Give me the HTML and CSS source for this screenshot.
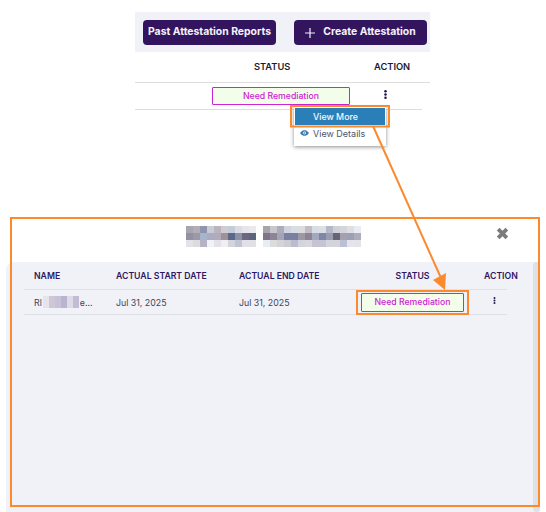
FILE: index.html
```html
<!DOCTYPE html>
<html lang="en">
<head>
<meta charset="utf-8">
<title>Attestation</title>
<link rel="stylesheet" href="styles.css">
</head>
<body>
<section class="top">
  <div class="toolbar">
    <button class="btn btn-past">Past Attestation Reports</button>
    <button class="btn btn-create"><svg class="plus" viewBox="0 0 10 10"><path d="M5 0V10M0 5H10"/></svg>Create Attestation</button>
  </div>
  <div class="top-head">
    <span class="top-status">STATUS</span>
    <span class="top-action">ACTION</span>
  </div>
  <div class="top-row">
    <span class="badge top-badge">Need Remediation</span>
    <svg class="dots top-dots" viewBox="0 0 3 10"><circle cx="1.5" cy="1.400" r="1.400"/><circle cx="1.5" cy="5" r="1.400"/><circle cx="1.5" cy="8.600" r="1.400"/></svg>
    <div class="menu">
      <div class="menu-item active">View More</div>
      <div class="menu-item"><svg class="eye" viewBox="0 0 16 10"><path d="M0 5C3 1 5.500 0 8 0s5 1 8 5c-3 4-5.500 5-8 5S3 9 0 5z"/><circle cx="8" cy="5" r="2.500" fill="#fff"/><circle cx="8" cy="5" r="1.400"/></svg>View Details</div>
    </div>
  </div>
</section>

<section class="modal">
  <header class="modal-head">
    <svg class="blur-title" width="175" height="21" viewBox="0 0 25 3" shape-rendering="crispEdges">
      <g>
        <rect x="0" y="0" width="1" height="1" fill="#a8a4b0"/><rect x="1" y="0" width="1" height="1" fill="#b3aeb6"/><rect x="2" y="0" width="1" height="1" fill="#9094ac"/><rect x="3" y="0" width="1" height="1" fill="#c8ccd8"/><rect x="4" y="0" width="1" height="1" fill="#bcb4bc"/><rect x="5" y="0" width="1" height="1" fill="#d0ccd4"/><rect x="6" y="0" width="1" height="1" fill="#c4ccd8"/><rect x="7" y="0" width="1" height="1" fill="#dcdce4"/><rect x="8" y="0" width="1" height="1" fill="#e4e4ea"/><rect x="9" y="0" width="1" height="1" fill="#eaeaee"/>
        <rect x="11" y="0" width="1" height="1" fill="#a8a4ac"/><rect x="12" y="0" width="1" height="1" fill="#c8c8cc"/><rect x="13" y="0" width="1" height="1" fill="#acacbc"/><rect x="14" y="0" width="1" height="1" fill="#d0d4e0"/><rect x="15" y="0" width="1" height="1" fill="#d8dce4"/><rect x="16" y="0" width="1" height="1" fill="#dcdce0"/><rect x="17" y="0" width="1" height="1" fill="#c4bcc4"/><rect x="18" y="0" width="1" height="1" fill="#d8dce4"/><rect x="19" y="0" width="1" height="1" fill="#dce0e6"/><rect x="20" y="0" width="1" height="1" fill="#b4b8c8"/><rect x="21" y="0" width="1" height="1" fill="#d0d0d8"/><rect x="22" y="0" width="1" height="1" fill="#d4d6dc"/><rect x="23" y="0" width="1" height="1" fill="#e0dee0"/><rect x="24" y="0" width="1" height="1" fill="#e8ecf4"/>
      </g>
      <g>
        <rect x="0" y="1" width="1" height="1" fill="#9490a0"/><rect x="1" y="1" width="1" height="1" fill="#9c98a8"/><rect x="2" y="1" width="1" height="1" fill="#a8b4cc"/><rect x="3" y="1" width="1" height="1" fill="#acacc0"/><rect x="4" y="1" width="1" height="1" fill="#b0acbc"/><rect x="5" y="1" width="1" height="1" fill="#a09098"/><rect x="6" y="1" width="1" height="1" fill="#5c6888"/><rect x="7" y="1" width="1" height="1" fill="#8c90a8"/><rect x="8" y="1" width="1" height="1" fill="#6c6880"/><rect x="9" y="1" width="1" height="1" fill="#5c6480"/>
        <rect x="11" y="1" width="1" height="1" fill="#807488"/><rect x="12" y="1" width="1" height="1" fill="#8c8498"/><rect x="13" y="1" width="1" height="1" fill="#a4a4b4"/><rect x="14" y="1" width="1" height="1" fill="#7c80a0"/><rect x="15" y="1" width="1" height="1" fill="#7c80a0"/><rect x="16" y="1" width="1" height="1" fill="#9c98a4"/><rect x="17" y="1" width="1" height="1" fill="#8c8494"/><rect x="18" y="1" width="1" height="1" fill="#a4a8bc"/><rect x="19" y="1" width="1" height="1" fill="#7c88a4"/><rect x="20" y="1" width="1" height="1" fill="#9c9cb0"/><rect x="21" y="1" width="1" height="1" fill="#686478"/><rect x="22" y="1" width="1" height="1" fill="#a4a0b0"/><rect x="23" y="1" width="1" height="1" fill="#9ca0b4"/><rect x="24" y="1" width="1" height="1" fill="#acacbc"/>
      </g>
      <g>
        <rect x="0" y="2" width="1" height="1" fill="#e4e2e8"/><rect x="1" y="2" width="1" height="1" fill="#dcdcdc"/><rect x="2" y="2" width="1" height="1" fill="#b4b4c4"/><rect x="3" y="2" width="1" height="1" fill="#f0f2f8"/><rect x="4" y="2" width="1" height="1" fill="#e4e2e8"/><rect x="5" y="2" width="1" height="1" fill="#f0eeee"/><rect x="6" y="2" width="1" height="1" fill="#d4d4dc"/><rect x="7" y="2" width="1" height="1" fill="#c0c4d4"/><rect x="8" y="2" width="1" height="1" fill="#e0e0e6"/><rect x="9" y="2" width="1" height="1" fill="#e0e0e6"/>
        <rect x="11" y="2" width="1" height="1" fill="#e8ecf4"/><rect x="12" y="2" width="1" height="1" fill="#dcdcdf"/><rect x="13" y="2" width="1" height="1" fill="#d4d4d8"/><rect x="14" y="2" width="1" height="1" fill="#ccccd4"/><rect x="15" y="2" width="1" height="1" fill="#bcbccc"/><rect x="16" y="2" width="1" height="1" fill="#d4d4de"/><rect x="17" y="2" width="1" height="1" fill="#d8d8dc"/><rect x="18" y="2" width="1" height="1" fill="#c4c4d4"/><rect x="19" y="2" width="1" height="1" fill="#c4c4d4"/><rect x="20" y="2" width="1" height="1" fill="#d4d4dc"/><rect x="21" y="2" width="1" height="1" fill="#d4d4dc"/><rect x="22" y="2" width="1" height="1" fill="#bcc0d4"/><rect x="23" y="2" width="1" height="1" fill="#e4e4ea"/><rect x="24" y="2" width="1" height="1" fill="#e4e4e8"/>
      </g>
    </svg>
    <svg class="close" viewBox="0 0 12 12"><path d="M2 2L10 10M10 2L2 10"/></svg>
  </header>
  <div class="modal-body">
    <div class="grid grid-head">
      <span>NAME</span>
      <span>ACTUAL START DATE</span>
      <span>ACTUAL END DATE</span>
      <span class="center">STATUS</span>
      <span class="head-action">ACTION</span>
    </div>
    <div class="grid grid-row">
      <span class="name">Rl<svg class="blur-name" width="36" height="12" viewBox="0 0 6 2" shape-rendering="crispEdges"><rect x="0" y="0" width="1" height="2" fill="#e4e4ee"/><rect x="1" y="0" width="1" height="2" fill="#d0c6d6"/><rect x="2" y="0" width="1" height="2" fill="#c6c2d8"/><rect x="3" y="0" width="1" height="2" fill="#bab4d0"/><rect x="4" y="0" width="1" height="2" fill="#dedae6"/><rect x="5" y="0" width="1" height="2" fill="#c2bcd4"/></svg>e...</span>
      <span>Jul 31, 2025</span>
      <span>Jul 31, 2025</span>
      <span class="center"><span class="badge row-badge">Need Remediation</span></span>
      <svg class="dots row-dots" viewBox="0 0 3 10"><circle cx="1.5" cy="1.400" r="1.400"/><circle cx="1.5" cy="5" r="1.400"/><circle cx="1.5" cy="8.600" r="1.400"/></svg>
    </div>
    <div class="scrollbar"></div>
  </div>
</section>

<svg class="annotations" width="546" height="512" viewBox="0 0 546 512">
  <rect x="291" y="106" width="98" height="20.500" />
  <rect x="11" y="218" width="528" height="288" />
  <rect x="357" y="291" width="111" height="23" />
  <line x1="373" y1="126" x2="441" y2="278" />
  <path class="head" d="M433 280L446 273L445 290Z" />
</svg>
</body>
</html>
```
FILE: styles.css
```css
* { box-sizing: border-box; }
html, body { margin: 0; padding: 0; background: #fff; }
body {
  position: relative;
  width: 546px;
  height: 512px;
  overflow: hidden;
  font-family: Inter, "Liberation Sans", sans-serif;
}
.top { margin-left: 135px; width: 295px; padding-top: 12px; }
.toolbar {
  display: flex;
  align-items: center;
  gap: 18px;
  height: 40px;
  padding: 0 3px 0 8px;
  background: #f1f2f7;
}
.btn {
  display: flex;
  align-items: center;
  justify-content: center;
  width: 133px;
  height: 25px;
  padding: 0 0 2px;
  border: 0;
  border-radius: 4px;
  background: #33145f;
  color: #f4f2f8;
  font: 700 10.400px Inter, "Liberation Sans", sans-serif;
  white-space: nowrap;
}
.plus { width: 10px; height: 10px; margin-right: 8px; margin-top: 4px; fill: none; stroke: #f4f2f8; stroke-width: 1.200; }
.top-head {
  position: relative;
  height: 31px;
  border-bottom: 1px solid #dedede;
  font-size: 9.300px;
  font-weight: 600;
  color: #1c1b33;
}
.top-status { position: absolute; left: 119px; top: 9px; }
.top-action { position: absolute; left: 239px; top: 9px; }
.top-row {
  position: relative;
  width: 287px;
  height: 27px;
  border-bottom: 1px solid #dedede;
}
.badge {
  display: flex;
  align-items: center;
  justify-content: center;
  height: 18px;
  padding-bottom: 1px;
  border: 1px solid #cf21d6;
  border-radius: 1px;
  background: #f2fdea;
  color: #cf21d6;
  font-size: 8.700px;
  font-weight: 500;
}
.top-badge { position: absolute; left: 77px; top: 4px; width: 138px; }
.dots { display: block; fill: #1f1546; }
.top-dots { position: absolute; left: 249px; top: 7px; width: 3px; height: 9px; }
.menu {
  position: absolute;
  left: 159px;
  top: 24px;
  width: 92px;
  height: 39px;
  padding: 1px;
  background: #fff;
  box-shadow: 0 1px 4px rgba(0, 0, 0, .45);
  z-index: 1;
}
.menu-item {
  display: flex;
  align-items: center;
  height: 17px;
  padding-left: 5px;
  color: #4c5668;
  font-size: 9px;
}
.menu-item.active {
  height: 17px;
  padding-left: 18px;
  background: #2b7fb8;
  color: #f3f8fb;
  font-size: 8.800px;
  font-weight: 500;
}
.eye { width: 9px; height: 6px; margin-right: 4px; margin-bottom: 2px; fill: #3d7cb0; }
.modal {
  margin-top: 107px;
  margin-left: 6px;
  width: 534px;
}
.modal-head {
  position: relative;
  height: 45px;
}
.blur-title { position: absolute; left: 180px; top: 9px; }
.close { position: absolute; left: 490px; top: 10px; width: 13px; height: 13px; fill: none; stroke: #7b7b7b; stroke-width: 3.500; }
.modal-body {
  position: relative;
  height: 250px;
  padding-left: 18px;
  background: #f1f2f7;
  border-top-left-radius: 8px;
}
.grid {
  display: grid;
  grid-template-columns: 82px 123px 117px 113px 1fr;
  align-items: center;
  width: 483px;
  padding-left: 10px;
  border-bottom: 1px solid #dfe0e6;
}
.grid-head {
  height: 28px;
  color: #2d1762;
  font-size: 8.700px;
  font-weight: 600;
}
.grid-row {
  height: 25px;
  color: #40435c;
  font-size: 8.800px;
}
.center { display: flex; justify-content: center; }
.head-action { white-space: nowrap; margin-left: 15px; }
.name { display: flex; align-items: center; white-space: nowrap; }
.blur-name { margin: 0 1px; }
.row-badge { width: 103px; height: 19px; }
.row-dots { width: 3px; height: 7px; margin-left: 24px; margin-top: -3px; }
.scrollbar {
  position: absolute;
  left: 527px;
  top: 0;
  width: 7px;
  height: 250px;
  border-radius: 4px;
  background: #dfe0e4;
}
.annotations {
  position: absolute;
  left: 0;
  top: 0;
  fill: none;
  stroke: #fb8a2e;
  stroke-width: 2;
  pointer-events: none;
  z-index: 2;
}
.annotations .head { fill: #fb8a2e; stroke: none; }
```
